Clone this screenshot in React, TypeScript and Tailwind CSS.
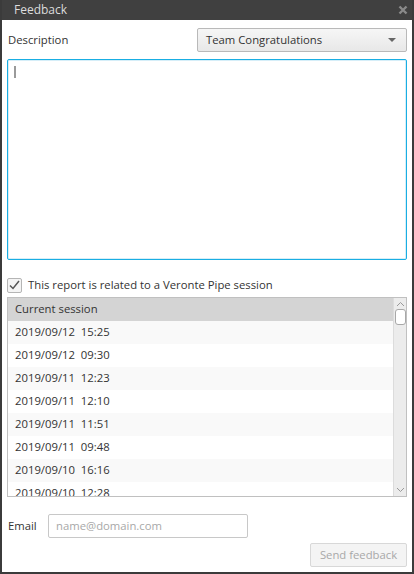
import React from "react";

const sessions = [
  "2019/09/12  15:25",
  "2019/09/12  09:30",
  "2019/09/11  12:23",
  "2019/09/11  12:10",
  "2019/09/11  11:51",
  "2019/09/11  09:48",
  "2019/09/10  16:16",
  "2019/09/10  12:28",
];

const App: React.FC = () => {
  return (
    <div
      className="w-[414px] h-[574px] bg-[#3b3b3b] p-[2px] pt-0 flex flex-col text-[11.3px] text-[#333]"
      style={{ fontFamily: '"Open Sans", "Noto Sans", sans-serif' }}
    >
      {/* title bar */}
      <div className="h-[20px] shrink-0 flex items-center justify-between pl-[12px] pr-[4px] bg-[#404040] text-[#dcdcdc] text-[12px]">
        <span>Feedback</span>
        <svg width="10" height="10" viewBox="0 0 10 10">
          <path d="M1.5 1.5 L8.5 8.5 M8.5 1.5 L1.5 8.5" stroke="#8a8a8a" strokeWidth="2.4" />
        </svg>
      </div>

      <div className="flex-1 bg-white flex flex-col px-[5px]">
        {/* description row */}
        <div className="flex items-center justify-between mt-[8px] h-[24px]">
          <span className="pl-[1px]">Description</span>
          <div className="w-[210px] h-[24px] flex items-center justify-between pl-[8px] pr-[10px] border border-[#b9b9b9] rounded-[2px] bg-gradient-to-b from-[#f6f6f6] to-[#e8e8e8]">
            <span>Team Congratulations</span>
            <svg width="8" height="4" viewBox="0 0 8 4">
              <path d="M0 0 H8 L4 4 Z" fill="#666" />
            </svg>
          </div>
        </div>

        {/* text area */}
        <div className="mt-[7px] h-[201px] border border-[#19aee3] rounded-[2px] shadow-[inset_0_0_0_1px_#d6eef8] p-[6px]">
          <div className="w-[2px] h-[12px] bg-[#9a9a9a] ml-[0px] mt-[0px]" />
        </div>

        {/* checkbox */}
        <div className="flex items-center gap-[6px] mt-[17px] h-[16px]">
          <div className="w-[15px] h-[15px] border border-[#b5b5b5] rounded-[2px] bg-[#f4f4f4] flex items-center justify-center">
            <svg width="11" height="10" viewBox="0 0 11 10">
              <path d="M1 5.5 L4 8.5 L10 1" fill="none" stroke="#555" strokeWidth="1.5" />
            </svg>
          </div>
          <span>This report is related to a Veronte Pipe session</span>
        </div>

        {/* session list */}
        <div className="mt-[4px] h-[200px] border border-[#c0c0c0] flex overflow-hidden">
          <div className="flex-1 flex flex-col overflow-hidden">
            <div className="h-[23px] shrink-0 bg-[#d4d4d4] flex items-center pl-[7px]">Current session</div>
            {sessions.map((s, i) => (
              <div
                key={s}
                className={`h-[23px] shrink-0 flex items-center pl-[7px] whitespace-pre ${
                  i % 2 === 0 ? "bg-[#f9f9f9]" : "bg-white"
                }`}
              >
                {s}
              </div>
            ))}
          </div>
          <div className="w-[13px] bg-[#ececec] border-l border-[#dcdcdc] flex flex-col items-center">
            <svg width="9" height="6" viewBox="0 0 9 6" className="mt-[3px]">
              <path d="M1 5 L4.5 1.5 L8 5" fill="none" stroke="#999" strokeWidth="1" />
            </svg>
            <div className="mt-[2px] w-[11px] h-[16px] bg-white border border-[#a8a8a8] rounded-[3px]" />
            <div className="flex-1" />
            <svg width="9" height="6" viewBox="0 0 9 6" className="mb-[3px]">
              <path d="M1 1 L4.5 4.5 L8 1" fill="none" stroke="#999" strokeWidth="1" />
            </svg>
          </div>
        </div>

        {/* email */}
        <div className="flex items-center mt-[17px] h-[24px]">
          <span className="w-[41px] pl-[1px]">Email</span>
          <div className="w-[200px] h-[24px] border border-[#c8c8c8] rounded-[2px] flex items-center pl-[7px] text-[#a8a8a8]">
            name@domain.com
          </div>
        </div>

        {/* button */}
        <div className="flex justify-end mt-[5px]">
          <div className="w-[97px] h-[24px] border border-[#d8d8d8] rounded-[2px] bg-[#f4f4f4] flex items-center justify-center text-[#a8a8a8]">
            Send feedback
          </div>
        </div>
      </div>
    </div>
  );
};

export default App;
